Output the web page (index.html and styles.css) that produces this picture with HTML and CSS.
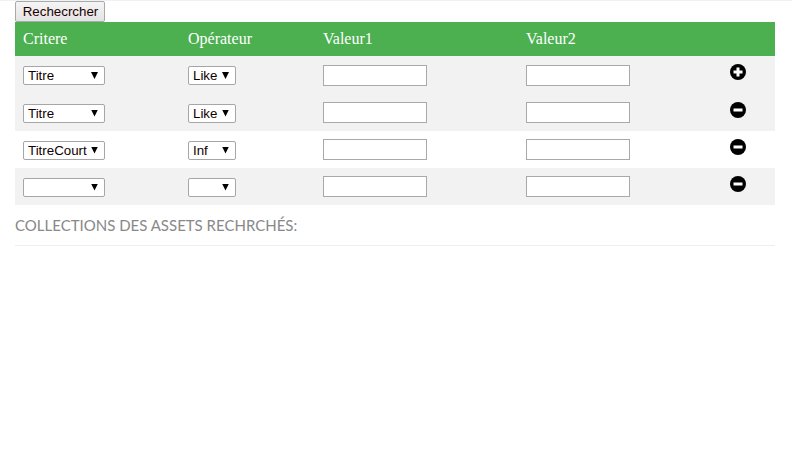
FILE: index.html
```html
<!DOCTYPE html>
<html lang="fr">
<head>
<meta charset="utf-8">
<title>Recherche</title>
<link rel="stylesheet" href="styles.css">
</head>
<body>
<main class="page">
  <button class="search" type="button">Rechecrcher</button>
  <table class="criteria">
    <thead>
      <tr>
        <th class="col-a">Critere</th>
        <th class="col-b">Opérateur</th>
        <th class="col-c">Valeur1</th>
        <th class="col-d">Valeur2</th>
        <th class="col-e"></th>
      </tr>
    </thead>
    <tbody>
      <tr class="first">
        <td><span class="pick wide"><select><option>Titre</option></select></span></td>
        <td><span class="pick narrow"><select><option>Like</option></select></span></td>
        <td><input type="text"></td>
        <td><input type="text"></td>
        <td><svg class="icon" viewBox="0 0 16 16"><circle cx="8" cy="8" r="8"/><path class="mark" d="M6.5 3.5h3v3h3v3h-3v3h-3v-3h-3v-3h3z"/></svg></td>
      </tr>
      <tr class="grey">
        <td><span class="pick wide"><select><option>Titre</option></select></span></td>
        <td><span class="pick narrow"><select><option>Like</option></select></span></td>
        <td><input type="text"></td>
        <td><input type="text"></td>
        <td><svg class="icon" viewBox="0 0 16 16"><circle cx="8" cy="8" r="8"/><rect class="mark" x="3.5" y="6.5" width="9" height="3"/></svg></td>
      </tr>
      <tr>
        <td><span class="pick wide"><select><option>TitreCourt</option></select></span></td>
        <td><span class="pick narrow"><select><option>Inf</option></select></span></td>
        <td><input type="text"></td>
        <td><input type="text"></td>
        <td><svg class="icon" viewBox="0 0 16 16"><circle cx="8" cy="8" r="8"/><rect class="mark" x="3.5" y="6.5" width="9" height="3"/></svg></td>
      </tr>
      <tr class="grey">
        <td><span class="pick wide"><select><option></option></select></span></td>
        <td><span class="pick narrow"><select><option></option></select></span></td>
        <td><input type="text"></td>
        <td><input type="text"></td>
        <td><svg class="icon" viewBox="0 0 16 16"><circle cx="8" cy="8" r="8"/><rect class="mark" x="3.5" y="6.5" width="9" height="3"/></svg></td>
      </tr>
    </tbody>
  </table>
  <h2 class="title">COLLECTIONS DES ASSETS RECHRCHÉS:</h2>
  <hr class="rule">
</main>
</body>
</html>
```
FILE: styles.css
```css
html, body {
  margin: 0;
  padding: 0;
  background: #fff;
}

body {
  border-top: 1px solid #f1f1f5;
  overflow: hidden;
}

.page {
  padding: 0 17px 0 15px;
  font-family: "Liberation Sans", Arial, sans-serif;
}

.search {
  display: block;
  box-sizing: border-box;
  width: 90px;
  height: 21px;
  margin: 0;
  padding: 0 0 0 1px;
  border: 1px solid #a9a9a9;
  border-radius: 2px;
  background: linear-gradient(#f5f5f5, #e4e4e4);
  color: #200;
  font: 13.33px "Liberation Sans", Arial, sans-serif;
}

.criteria {
  width: 760px;
  table-layout: fixed;
  border-collapse: collapse;
}

.criteria th,
.criteria td {
  box-sizing: border-box;
}

.criteria th {
  height: 34px;
  padding: 0 8px;
  background: #4caf50;
  color: #fff;
  font: 400 16px "Liberation Serif", "Times New Roman", serif;
  text-align: left;
}

.col-a { width: 165px; }
.col-b { width: 135px; }
.col-c { width: 203px; }
.col-d { width: 204px; }
.col-e { width: 53px; }

.criteria td {
  height: 37px;
  padding: 0 8px;
  line-height: 0;
}

.first td {
  height: 38px;
  background: #f2f2f2;
}

.grey td {
  background: #f2f2f2;
}

.pick {
  position: relative;
  display: inline-block;
  height: 19px;
  margin-top: 1px;
}

.wide { width: 82px; }
.narrow { width: 48px; }

.pick::after {
  content: "";
  position: absolute;
  top: 6px;
  right: 7px;
  width: 7px;
  height: 7px;
  background: #000;
  clip-path: polygon(0 0, 100% 0, 50% 100%);
  pointer-events: none;
}

.pick select {
  display: block;
  box-sizing: border-box;
  width: 100%;
  height: 19px;
  margin: 0;
  padding: 0 0 0 4px;
  border: 1px solid #a6a6a6;
  border-radius: 2px;
  background: #fff;
  appearance: none;
  color: #100;
  font: 13.33px "Liberation Sans", Arial, sans-serif;
}

.criteria input {
  display: block;
  box-sizing: border-box;
  width: 104px;
  height: 21px;
  margin: 0;
  padding: 1px 2px;
  border: 1px solid #a9a9a9;
  background: #fff;
}

.icon {
  display: block;
  width: 16px;
  height: 16px;
  margin-top: -6px;
}

.mark {
  fill: #fff;
}

.title {
  margin: 10px 0 0;
  color: #888;
  font: 400 15px/20px "Lato", sans-serif;
}

.rule {
  height: 1px;
  margin: 10px 0 0;
  border: 0;
  background: #eee;
}
```
